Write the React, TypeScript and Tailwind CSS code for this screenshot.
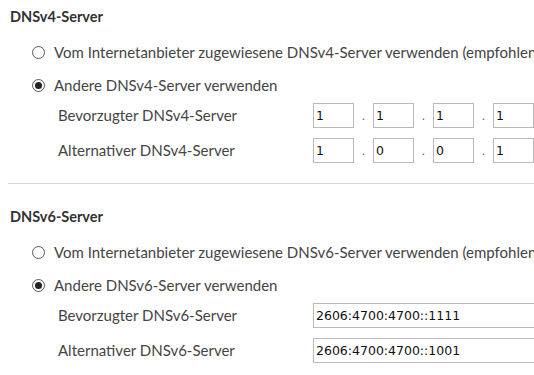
import React from 'react';

interface Server {
    label: string;
    value: string[];
}

interface SectionProps {
    version: 'v4' | 'v6';
    preferred: Server;
    alternative: Server;
    first?: boolean;
}

const Radio: React.FC<{ checked?: boolean }> = ({ checked }) => (
    <span className="flex h-[13px] w-[13px] shrink-0 items-center justify-center rounded-full border border-[#5a5a5a] bg-white">
        {checked && <span className="h-[7px] w-[7px] rounded-full bg-[#222]" />}
    </span>
);

const inputClass = "h-[25px] shrink-0 border border-[#b9b9b9] bg-white px-[2px] text-[12.5px] text-[#111] outline-none [font-family:'DejaVu_Sans',Verdana,sans-serif]";

const AddressInput: React.FC<{ value: string[]; version: 'v4' | 'v6' }> = ({ value, version }) => {
    if (version === 'v6') {
        return <input readOnly value={value[0]} className={`${inputClass} w-[240px]`} />;
    }
    return (
        <div className="flex shrink-0 items-center">
            {value.map((part, i) => (
                <React.Fragment key={i}>
                    {i > 0 && <span className="w-[19px] text-center text-[12px] text-[#666]">.</span>}
                    <input readOnly value={part} className={`${inputClass} w-[41px]`} />
                </React.Fragment>
            ))}
        </div>
    );
};

const Section: React.FC<SectionProps> = ({ version, preferred, alternative, first }) => {
    const name = `DNS${version}-Server`;
    return (
        <section className={first ? 'pt-2' : 'pt-[24px]'}>
            <h2 className="h-[18px] pl-[10px] text-[14.5px] font-bold leading-[18px] text-[#333]">{name}</h2>

            <div className="mt-[10px] pl-[32px]">
                <label className="flex h-[33px] items-center gap-[9px] whitespace-nowrap">
                    <Radio />
                    <span>Vom Internetanbieter zugewiesene {name} verwenden (empfohlen)</span>
                </label>
                <label className="flex h-[33px] items-center gap-[9px] whitespace-nowrap">
                    <Radio checked />
                    <span>Andere {name} verwenden</span>
                </label>
            </div>

            <div className="mt-[1px] flex h-[25px] items-center pl-[58px]">
                <span className="w-[255px] shrink-0">{preferred.label}</span>
                <AddressInput value={preferred.value} version={version} />
            </div>
            <div className="mt-[10px] flex h-[25px] items-center pl-[58px]">
                <span className="w-[255px] shrink-0">{alternative.label}</span>
                <AddressInput value={alternative.value} version={version} />
            </div>
        </section>
    );
};

const App: React.FC = () => {
    return (
        <div className="h-[375px] w-[534px] overflow-hidden bg-white text-[15px] text-[#444] [font-family:Lato,'Noto_Sans',sans-serif]">
            <Section
                first
                version="v4"
                preferred={{ label: 'Bevorzugter DNSv4-Server', value: ['1', '1', '1', '1'] }}
                alternative={{ label: 'Alternativer DNSv4-Server', value: ['1', '0', '0', '1'] }}
            />
            <div className="ml-[8px] mt-[20px] h-px bg-[#d6d6d6]" />
            <Section
                version="v6"
                preferred={{ label: 'Bevorzugter DNSv6-Server', value: ['2606:4700:4700::1111'] }}
                alternative={{ label: 'Alternativer DNSv6-Server', value: ['2606:4700:4700::1001'] }}
            />
        </div>
    );
};

export default App;
